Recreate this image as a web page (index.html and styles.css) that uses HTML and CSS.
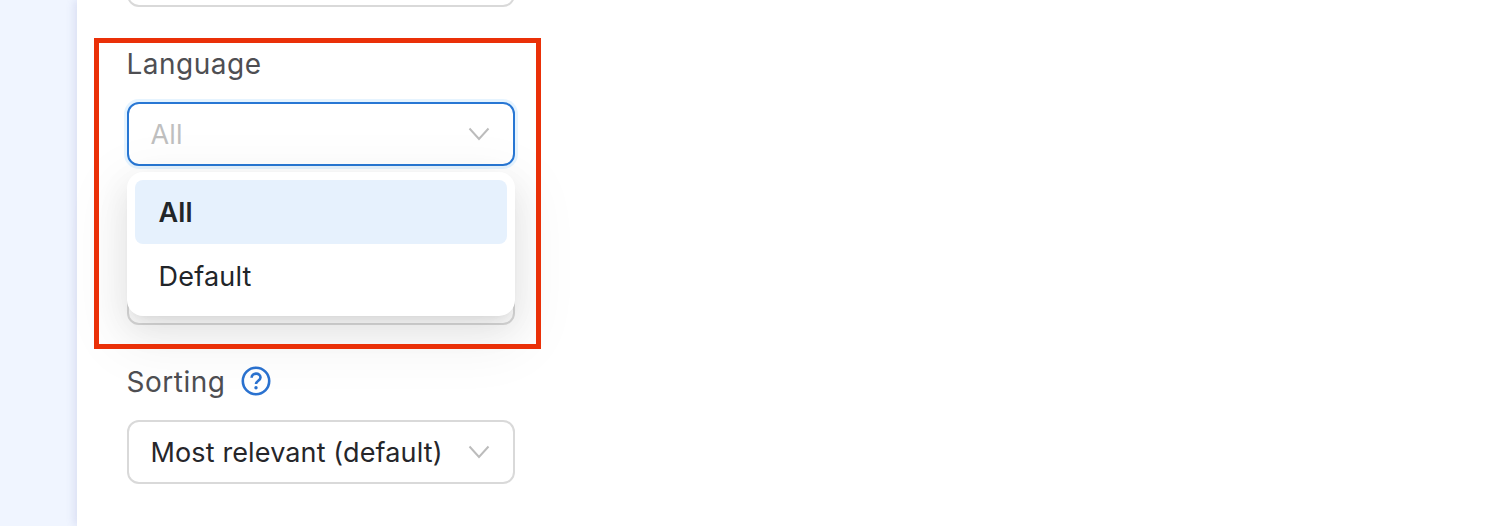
FILE: index.html
```html
<!DOCTYPE html>
<html lang="en">
<head>
    <meta charset="UTF-8">
    <meta name="viewport" content="width=device-width, initial-scale=1.0">
    <title>Search Filters</title>
    <link rel="stylesheet" href="styles.css">
</head>
<body>
    <div class="page">
        <aside class="sidebar"></aside>
        <main class="panel">
            <div class="field field-first">
                <div class="select"></div>
            </div>

            <div class="field">
                <div class="field-label">Language</div>
                <div class="select select-focused">
                    <span class="select-placeholder">All</span>
                    <svg class="chevron" viewBox="0 0 22 14"><polyline points="1.5,1.5 11,12 20.5,1.5"/></svg>
                </div>
                <div class="dropdown">
                    <div class="option option-selected">All</div>
                    <div class="option">Default</div>
                </div>
            </div>

            <div class="field">
                <div class="field-label"></div>
                <div class="select"></div>
            </div>

            <div class="field">
                <div class="field-label">
                    Sorting
                    <svg class="help-icon" viewBox="0 0 30 30">
                        <circle cx="15" cy="15" r="13.2"/>
                        <path d="M10.6 11.8c0-2.6 2-4.2 4.5-4.2s4.4 1.6 4.4 3.8c0 3.2-4.5 3.4-4.5 6.6"/>
                        <circle class="help-dot" cx="15" cy="21.8" r="1.7"/>
                    </svg>
                </div>
                <div class="select">
                    <span class="select-value">Most relevant (default)</span>
                    <svg class="chevron" viewBox="0 0 22 14"><polyline points="1.5,1.5 11,12 20.5,1.5"/></svg>
                </div>
            </div>

            <div class="highlight"></div>
        </main>
    </div>
</body>
</html>
```

FILE: styles.css
```css
html, body {
    margin: 0;
    height: 100%;
    overflow: hidden;
}
body {
    font-family: Inter, "Liberation Sans", sans-serif;
    background-color: #ffffff;
}
.page {
    display: flex;
    height: 526px;
    overflow: hidden;
}
.sidebar {
    width: 77px;
    flex-shrink: 0;
    background-color: #f0f5ff;
}
.panel {
    position: relative;
    flex: 1;
    padding: 0 0 0 49.5px;
    background-color: #ffffff;
    box-shadow: -3px 0 8px rgba(90, 100, 170, 0.14);
}
.field {
    position: relative;
    width: 388px;
    margin-bottom: 38px;
}
.field-first {
    margin-top: -57px;
}
.field-label {
    display: flex;
    align-items: center;
    gap: 16px;
    height: 38px;
    margin-bottom: 19px;
    font-size: 28px;
    letter-spacing: 0.5px;
    color: #4e4e52;
}
.select {
    display: flex;
    align-items: center;
    justify-content: space-between;
    height: 64px;
    padding: 0 23px 0 22px;
    box-sizing: border-box;
    border: 2px solid #d9d9d9;
    border-radius: 12px;
    background-color: #ffffff;
    font-size: 27px;
    letter-spacing: 0.13px;
}
.select-focused {
    border-color: #2877d4;
    box-shadow: 0 0 0 3px rgba(5, 145, 255, 0.1);
}
.select-placeholder {
    color: #bfbfbf;
}
.select-value {
    color: #26262a;
    white-space: nowrap;
}
.chevron {
    width: 22px;
    height: 14px;
    margin-left: auto;
    flex-shrink: 0;
}
.chevron polyline {
    fill: none;
    stroke: #bcbcbc;
    stroke-width: 2;
}
.help-icon {
    width: 30px;
    height: 30px;
    margin-top: -2px;
}
.help-icon circle,
.help-icon path {
    fill: none;
    stroke: #2a72d0;
    stroke-width: 2.6;
}
.help-icon .help-dot {
    fill: #2a72d0;
    stroke: none;
}
.dropdown {
    position: absolute;
    top: 127px;
    left: 0;
    right: 0;
    z-index: 2;
    padding: 8px;
    border-radius: 16px;
    background-color: #ffffff;
    box-shadow: 0 12px 32px rgba(0, 0, 0, 0.08), 0 6px 12px -8px rgba(0, 0, 0, 0.12), 0 18px 56px 16px rgba(0, 0, 0, 0.05);
}
.option {
    height: 64px;
    line-height: 66px;
    padding: 0 24px;
    border-radius: 8px;
    font-size: 27px;
    letter-spacing: 0.2px;
    color: #212529;
}
.option-selected {
    font-weight: 600;
    background-color: #e6f1fd;
}
.highlight {
    position: absolute;
    top: 38px;
    left: 17px;
    width: 447px;
    height: 311px;
    box-sizing: border-box;
    border: 5px solid #ea3008;
    z-index: 3;
}
```
